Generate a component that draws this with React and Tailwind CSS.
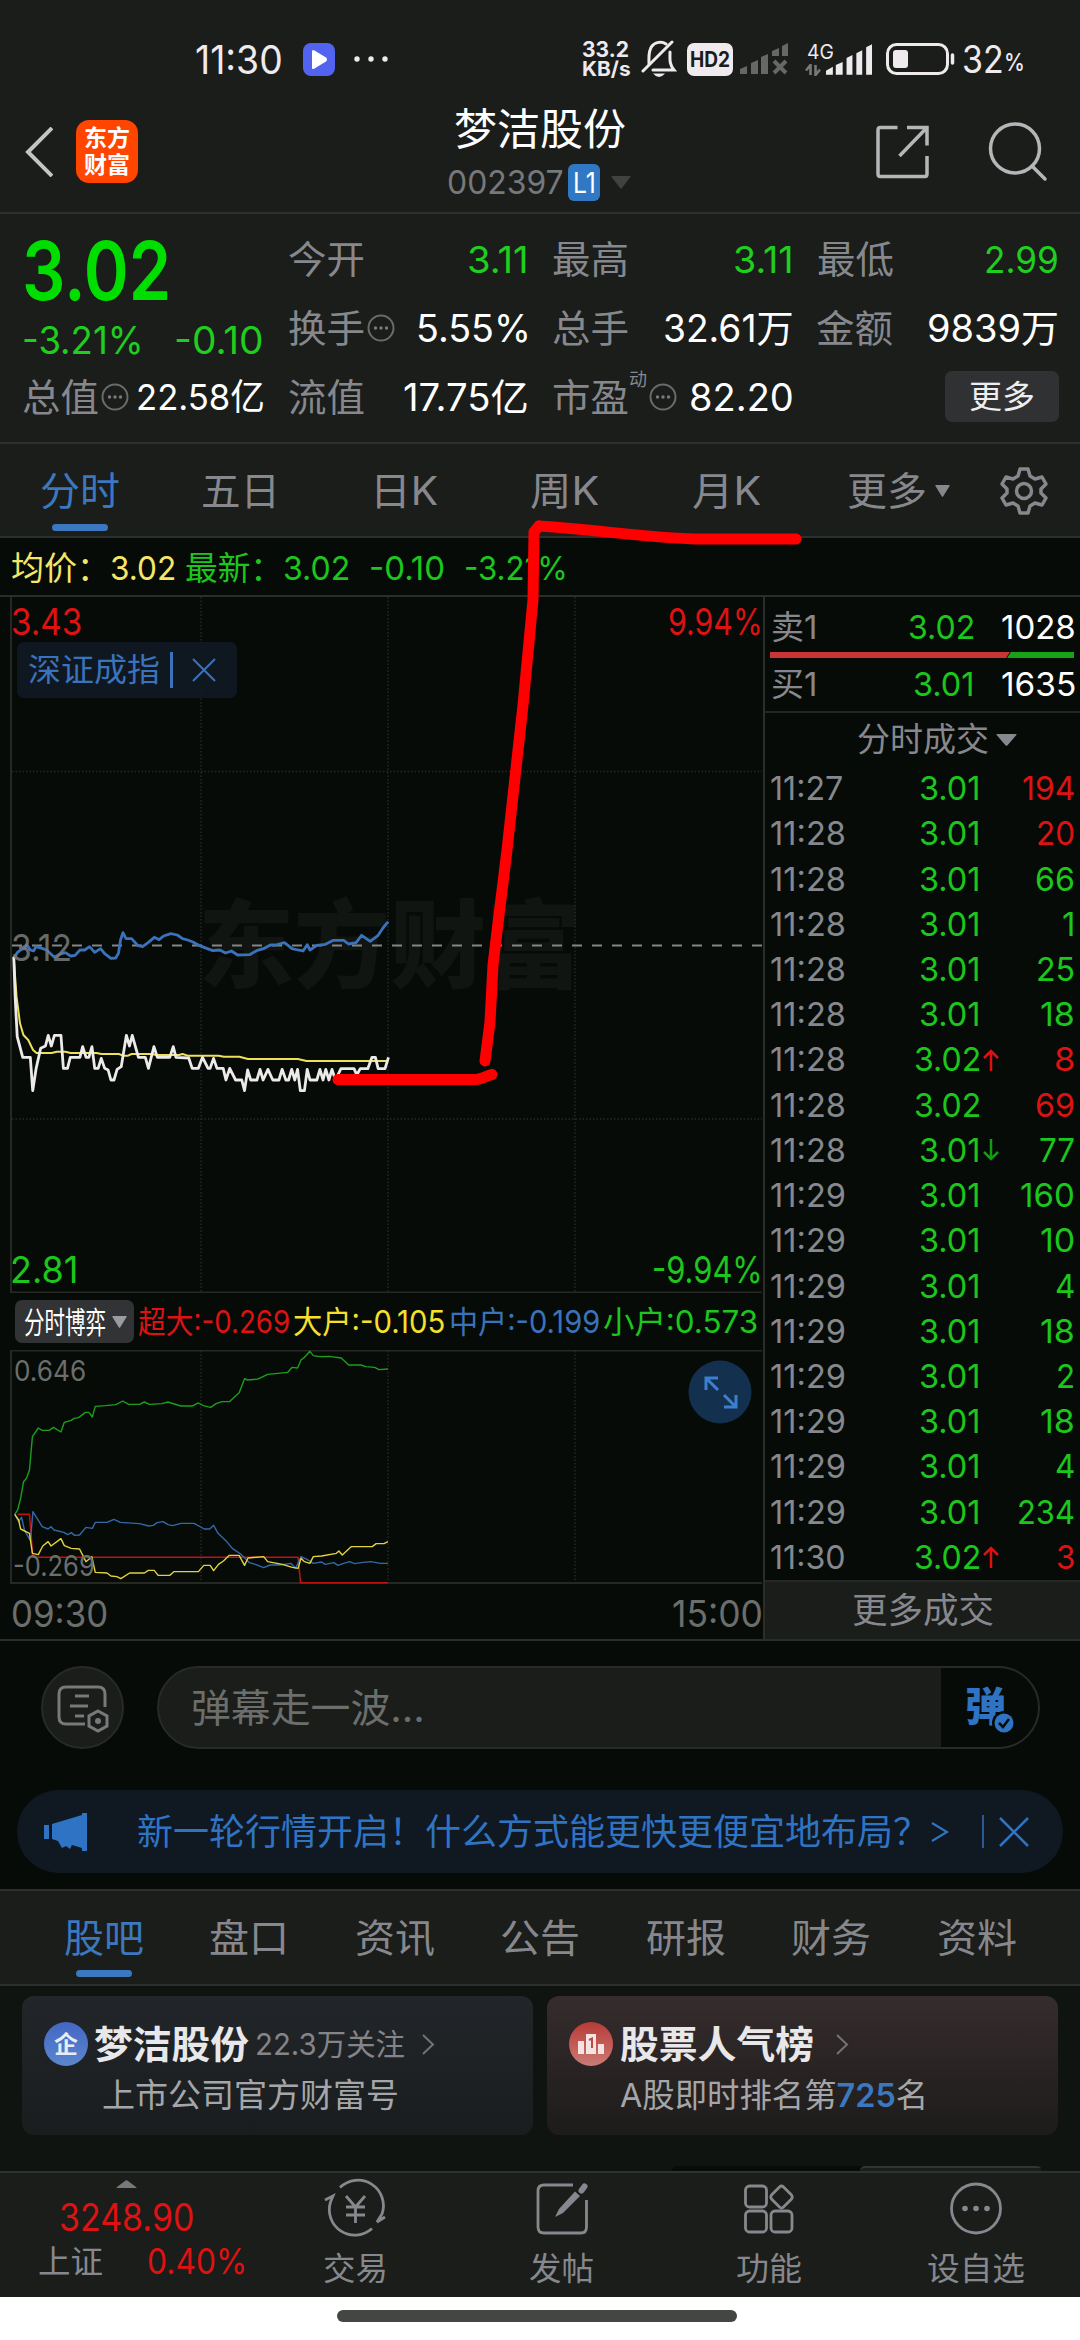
import React, { useLayoutEffect, useRef, useState } from "react";

/* Text squeezed or stretched horizontally to fill the width of its own box. */
function Fit({ className = "", children }) {
  const outer = useRef(null);
  const inner = useRef(null);
  const [scale, setScale] = useState(1);
  useLayoutEffect(() => {
    setScale(outer.current.clientWidth / inner.current.offsetWidth);
  }, []);
  return (
    <span ref={outer} className={"block shrink-0 whitespace-nowrap leading-none " + className}>
      <span ref={inner} className="inline-block origin-left leading-none align-top" style={{ transform: `scaleX(${scale})` }}>
        {children}
      </span>
    </span>
  );
}

const More = ({ className = "" }) => (
  <svg viewBox="0 0 28 28" className={"h-7 w-7 shrink-0 " + className} fill="none" stroke="#6a6b6d" strokeWidth="2">
    <circle cx="14" cy="14" r="12.5" />
    <g fill="#7a7b7e" stroke="none">
      <circle cx="8.5" cy="14" r="1.7" />
      <circle cx="14" cy="14" r="1.7" />
      <circle cx="19.5" cy="14" r="1.7" />
    </g>
  </svg>
);

const Triangle = ({ className = "" }) => (
  <svg viewBox="0 0 20 12" preserveAspectRatio="none" className={"shrink-0 " + className} fill="currentColor">
    <path d="M1 0H19Q20 0 19.4 1L10.8 11.4Q10 12 9.2 11.4L.6 1Q0 0 1 0Z" />
  </svg>
);

function StatusBar() {
  return (
    <div className="flex h-[105px] items-center pt-[13px] text-[#eeeaee]">
      <Fit className="ml-[195px] w-[88px] text-[39px]">11:30</Fit>
      <svg viewBox="0 0 32 33" className="ml-[20px] h-[33px] w-8">
        <rect width="32" height="33" rx="8" fill="#5263f0" />
        <path d="M9 8.500Q9 6 11.500 7.500L23 14.500Q25 16.500 23 18.500L11.500 25.500Q9 27 9 24.500Z" fill="#fff" />
      </svg>
      <svg viewBox="0 0 34 6" className="ml-[19px] h-1.5 w-[34px]" fill="currentColor">
        <circle cx="3" cy="3" r="2.700" />
        <circle cx="17" cy="3" r="2.700" />
        <circle cx="31" cy="3" r="2.700" />
      </svg>
      <div className="ml-[194px] flex flex-col font-bold">
        <Fit className="h-[20px] w-[47px] text-[21px]">33.2</Fit>
        <Fit className="h-[20px] w-[49px] text-[20px]">KB/s</Fit>
      </div>
      <svg viewBox="0 0 36 40" className="ml-[10px] h-10 w-9" fill="none" stroke="currentColor" strokeWidth="3">
        <path d="M8 25C8 19 7 12 11 7C14 3 21 2 25 5M29 13C29 20 28 25 33 31H12" strokeLinecap="round" />
        <path d="M2 32L31 3" strokeLinecap="round" />
        <path d="M12 34.500H24Q21 38 18 38Q15 38 12 34.500Z" fill="currentColor" stroke="none" />
      </svg>
      <div className="ml-[10px] flex h-[33px] w-[46px] items-center justify-center rounded-[7px] bg-[#eeeaee] text-[#1a1d1a]">
        <Fit className="w-[40px] text-[21px] font-bold">HD2</Fit>
      </div>
      <svg viewBox="0 0 48 32" className="ml-[7px] h-8 w-12" fill="#666866">
        <path d="M0 31V26L7 23V31ZM11 31V20L18 17V31ZM21 31V14L28 11V31ZM32 13V8L39 5V13ZM42 13V3L48 0V13Z" />
        <path d="M34 18L46 30M46 18L34 30" stroke="#666866" strokeWidth="4" />
      </svg>
      <div className="ml-[17px] flex h-[34px] w-[68px]">
        <div className="flex w-[28px] flex-col">
          <Fit className="ml-[2px] h-[20px] w-[27px] text-[20px]">4G</Fit>
          <svg viewBox="0 0 16 12" className="mt-[2px] h-3 w-4" stroke="#777977" strokeWidth="2.600" fill="none">
            <path d="M5.500 11V1L1 6.500M10.500 1V11L15 5.500" />
          </svg>
        </div>
        <svg viewBox="0 0 48 32" className="-ml-[7px] mt-[2px] h-8 w-12" fill="currentColor">
          <path d="M0 31V27L7 23V31ZM10 31V21L17 18V31ZM21 31V14L27 11V31ZM31 31V9L37 6V31ZM41 31V3L47 0V31Z" />
        </svg>
      </div>
      <svg viewBox="0 0 70 32" className="ml-[13px] h-8 w-[70px]" fill="none" stroke="currentColor" strokeWidth="3">
        <rect x="1.500" y="1.500" width="60" height="29" rx="9" />
        <path d="M66.500 12V20" strokeLinecap="round" strokeWidth="3.500" />
        <rect x="7" y="7" width="15" height="18" rx="3" fill="currentColor" stroke="none" />
      </svg>
      <Fit className="ml-[6px] w-[42px] text-[38px]">32</Fit>
      <Fit className="mt-2 w-[21px] text-[24px] font-medium">%</Fit>
    </div>
  );
}

function Header() {
  return (
    <div className="flex h-[109px] border-b-2 border-[#2c2f2c]">
      <div className="flex w-[447px]">
        <svg viewBox="0 0 28 50" className="ml-[25px] mt-[22px] h-[50px] w-7" fill="none" stroke="#c4c4c6" strokeWidth="4">
          <path d="M27 1L3 25L27 49" />
        </svg>
        <div className="ml-[23px] mt-[15px] flex h-[63px] w-[62px] flex-col items-center justify-center gap-[4px] rounded-[13px] bg-[#ff4500] text-[23px] font-bold text-white">
          <Fit className="w-[46px]">东方</Fit>
          <Fit className="w-[46px]">财富</Fit>
        </div>
      </div>
      <div className="flex w-[429px] flex-col">
        <Fit className="ml-[7px] mt-[3px] w-[172px] text-[43px] text-white">梦洁股份</Fit>
        <div className="mt-[13px] flex items-center">
          <Fit className="w-[117px] text-[33px] text-[#77787c]">002397</Fit>
          <span className="ml-[4px] flex h-[37px] w-[32px] items-center justify-center rounded-[6px] bg-[#3077c4] text-white">
            <Fit className="w-[23px] text-[29px]">L1</Fit>
          </span>
          <Triangle className="ml-[11px] h-[13px] w-[20px] text-[#3f4241]" />
        </div>
      </div>
      <div className="flex pt-[16px]">
        <svg viewBox="0 0 54 54" className="mt-[4px] h-[54px] w-[54px]" fill="none" stroke="#b6b6b9" strokeWidth="3.500">
          <path d="M21.500 2.500H4.500Q2 2.500 2 5V49Q2 51.500 4.500 51.500H49Q51 51.500 51 49V31M31 2.500H51V20.500M51 2.500L23.500 31" />
        </svg>
        <svg viewBox="0 0 60 62" className="ml-[58px] h-[62px] w-[60px]" fill="none" stroke="#b6b6b9" strokeWidth="3.500">
          <circle cx="27" cy="27.500" r="24.500" />
          <path d="M44 45L57 58" strokeLinecap="round" />
        </svg>
      </div>
    </div>
  );
}

const LABEL = "w-[77px] text-[38px] text-[#87888d]";

function Quote() {
  return (
    <div className="flex h-[230px] border-b-2 border-[#2c2f2c]">
      <div className="w-[265px] pl-[22px] pt-[17px] text-[#1fce1f]">
        <Fit className="w-[149px] text-[81px] font-semibold text-[#00de00]">3.02</Fit>
        <div className="mt-[9px] flex">
          <Fit className="w-[122px] text-[38px]">-3.21%</Fit>
          <Fit className="ml-[30px] w-[90px] text-[38px]">-0.10</Fit>
        </div>
        <div className="mt-[19px] flex items-center">
          <Fit className={LABEL}>总值</Fit>
          <More className="ml-[2px]" />
          <Fit className="ml-[7px] w-[129px] text-[36px] text-white">22.58亿</Fit>
        </div>
      </div>
      <div className="flex flex-col pl-[23px] pt-[11px]">
        <div className="flex h-[68px] items-center">
          <Fit className={LABEL}>今开</Fit>
          <Fit className="ml-[102px] w-[62px] text-[37px] text-[#1fce1f]">3.11</Fit>
          <Fit className={"ml-[23px] " + LABEL}>最高</Fit>
          <Fit className="ml-[104px] w-[61px] text-[37px] text-[#1fce1f]">3.11</Fit>
          <Fit className={"ml-[23px] " + LABEL}>最低</Fit>
          <Fit className="ml-[90px] w-[75px] text-[37px] text-[#1fce1f]">2.99</Fit>
        </div>
        <div className="flex h-[69px] items-center text-[38px] text-white">
          <Fit className={LABEL}>换手</Fit>
          <More className="ml-[2px]" />
          <Fit className="ml-[21px] w-[115px]">5.55%</Fit>
          <Fit className={"ml-[21px] " + LABEL}>总手</Fit>
          <Fit className="ml-[34px] w-[131px]">32.61万</Fit>
          <Fit className={"ml-[22px] " + LABEL}>金额</Fit>
          <Fit className="ml-[34px] w-[132px]">9839万</Fit>
        </div>
        <div className="flex h-[69px] items-center text-[38px] text-white">
          <Fit className={LABEL}>流值</Fit>
          <Fit className="ml-[38px] w-[126px]">17.75亿</Fit>
          <Fit className={"ml-[23px] " + LABEL}>市盈</Fit>
          <span className="mb-[34px] text-[18px] leading-none text-[#87888d]">动</span>
          <More className="ml-[2px]" />
          <Fit className="ml-[12px] w-[105px]">82.20</Fit>
          <div className="ml-[151px] flex h-[51px] w-[114px] items-center justify-center rounded-[7px] bg-[#303132]">
            <Fit className="w-[66px] text-[32px] text-[#eeeef0]">更多</Fit>
          </div>
        </div>
      </div>
    </div>
  );
}

function PeriodTabs() {
  return (
    <div className="flex h-[94px] border-b-2 border-[#2c2f2c] pt-[27px] text-[39px] text-[#87888d]">
      <div className="ml-[40px] flex w-[80px] flex-col items-center text-[#3b78bf]">
        <Fit className="w-[80px]">分时</Fit>
        <span className="mt-[14px] h-[7px] w-[56px] rounded-full bg-[#3b78bf]" />
      </div>
      <Fit className="ml-[81px] w-[79px]">五日</Fit>
      <Fit className="ml-[90px] w-[68px]">日K</Fit>
      <Fit className="ml-[92px] w-[69px]">周K</Fit>
      <Fit className="ml-[93px] w-[69px]">月K</Fit>
      <Fit className="ml-[86px] w-[80px]">更多</Fit>
      <Triangle className="ml-[8px] mt-[14px] h-[12px] w-[15px]" />
      <svg viewBox="0 0 48 48" className="-mt-[4px] ml-[50px] h-12 w-12" fill="none" stroke="#87888d" strokeWidth="3.500" strokeLinejoin="round">
        <path d="M20 2H28L30 9L35 12L42 10L46 17L41 22V26L46 31L42 38L35 36L30 39L28 46H20L18 39L13 36L6 38L2 31L7 26V22L2 17L6 10L13 12L18 9Z" />
        <circle cx="24" cy="24" r="7.500" />
      </svg>
    </div>
  );
}

const PRICE = "40,320 44,440 50,560 66,622 88,622 95,722 105,655 118,595 132,588 140,556 149,588 158,556 177,556 184,655 196,655 204,622 232,622 240,590 250,622 258,622 267,590 275,655 285,655 294,625 304,655 314,660 322,690 331,690 340,658 352,650 367,556 376,588 384,556 402,622 422,622 431,655 447,590 457,622 493,622 503,590 511,622 548,624 558,655 576,655 588,622 604,655 610,655 620,625 630,655 648,655 656,690 667,655 684,690 702,690 710,722 719,660 728,690 746,690 755,658 764,690 778,658 792,690 810,690 819,658 830,690 838,690 847,658 856,690 864,658 872,722 884,722 892,658 900,690 920,690 929,658 938,690 946,658 955,690 964,658 974,690 990,656 1028,656 1036,675 1046,656 1068,656 1080,622 1090,622 1098,656 1118,656 1128,622";
const AVERAGE = "40,325 48,440 58,520 68,555 82,570 96,600 106,609 150,609 165,605 190,605 205,609 280,609 295,612 345,612 358,617 372,617 382,612 440,612 455,615 520,615 530,612 545,617 635,617 650,620 695,620 720,627 865,627 890,633 1127,633";
const INDEX = "40,325 50,308 62,298 72,296 78,284 88,300 98,303 104,290 122,295 135,300 158,322 175,312 190,308 205,318 218,316 232,300 246,300 260,290 275,307 292,296 305,312 322,325 336,324 344,310 350,270 357,248 366,266 382,266 400,286 414,290 430,278 448,262 462,269 475,258 496,251 515,255 530,266 545,270 560,276 580,287 600,295 618,302 638,300 655,309 672,303 690,315 725,314 745,302 765,296 785,285 800,285 826,278 848,296 865,300 880,303 892,284 900,300 920,286 945,283 968,271 998,271 1012,282 1034,278 1050,256 1075,274 1098,256 1112,234 1127,215";

const SMALL = "30,853 36,840 42,805 48,755 54,745 60,720 66,620 78,594 86,601 100,601 109,592 124,606 131,577 145,571 151,565 160,563 174,547 181,547 188,561 194,529 215,527 236,524 250,513 262,523 284,523 294,516 304,523 330,521 342,516 368,528 392,528 404,519 414,527 429,532 440,521 452,515 467,515 487,488 498,446 504,450 526,447 545,433 586,427 595,412 606,414 613,390 620,382 631,364 638,377 650,380 670,379 695,384 710,405 735,405 745,410 763,412 772,419 790,417";
const HUGE = "36,853 60,853 67,982 607,982 612,1058 790,1058";
const MEDIUM = "30,853 38,875 44,862 50,902 62,932 67,845 86,890 98,897 104,890 110,900 130,907 138,914 145,908 152,916 162,915 175,892 188,895 194,877 218,877 232,868 245,877 284,881 303,888 312,886 320,878 332,875 342,884 352,887 368,880 395,880 416,897 427,897 435,886 444,910 460,932 473,955 490,972 508,998 520,1003 537,1013 550,1005 570,1005 592,1000 602,1015 613,980 625,988 638,1000 655,996 662,1003 680,998 688,1006 700,1000 712,995 722,1001 735,998 755,995 775,1000 790,1000";
const BIG = "30,853 38,870 42,897 60,910 66,970 78,974 87,948 98,935 104,948 124,926 131,947 145,955 162,957 175,995 187,980 194,1027 218,1029 226,1038 238,1040 246,1046 264,1029 294,1029 302,1021 314,1021 322,1036 346,1036 354,1025 404,1025 415,1006 428,1006 435,1022 445,1003 455,993 467,976 487,976 498,1006 505,984 537,980 545,995 575,1003 595,1012 607,1015 613,985 620,995 631,1000 638,980 655,978 685,970 690,963 697,975 715,950 758,950 766,941 782,941 790,935";

const Line = ({ points, color, width }) => (
  <polyline points={points} fill="none" stroke={color} strokeWidth={width} strokeLinejoin="round" vectorEffect="non-scaling-stroke" />
);

function MainChart() {
  return (
    <div className="relative h-[696px] w-[763px] text-[37px]">
      <div className="absolute left-[198px] top-[300px] text-[#111511]">
        <Fit className="w-[384px] text-[96px] font-black">东方财富</Fit>
      </div>
      <svg viewBox="0 597 763 696" className="absolute left-0 top-0 h-[696px] w-[763px]" fill="none">
        <path d="M11 597V1292.500H762" stroke="#262826" strokeWidth="2" />
        <path d="M201 597V1292M388 597V1292M575 597V1292M12 771.500H762M12 1119H762" stroke="#262926" strokeWidth="1.500" strokeDasharray="1.500 2" />
        <path d="M12 945.500H762" stroke="#858588" strokeWidth="2" strokeDasharray="10 10" />
        <g transform="translate(0 850) scale(0.3444 0.33333)">
          <Line points={AVERAGE} color="#eee05a" width="2" />
          <Line points={INDEX} color="#3a73bb" width="2.800" />
          <Line points={PRICE} color="#ecebea" width="2.800" />
        </g>
      </svg>
      <span className="absolute left-[11px] top-[332px] text-[#7a7c7a]/85"><Fit className="w-[61px]">3.12</Fit></span>
      <span className="absolute left-[11px] top-[6px] text-[#dd1212]"><Fit className="w-[71px]">3.43</Fit></span>
      <span className="absolute left-[668px] top-[6px] text-[#dd1212]"><Fit className="w-[95px]">9.94%</Fit></span>
      <div className="absolute left-[17px] top-[45px] flex h-[56px] w-[220px] items-center rounded-[7px] bg-[#111a24]/90 text-[#3a73bb]">
        <Fit className="ml-[11px] w-[132px] text-[32px]">深证成指</Fit>
        <span className="ml-[10px] h-[36px] w-[3px] bg-[#3a73bb]" />
        <svg viewBox="0 0 24 24" className="ml-[19px] h-6 w-6" stroke="currentColor" strokeWidth="2">
          <path d="M1 1L23 23M23 1L1 23" />
        </svg>
      </div>
      <span className="absolute left-[10px] top-[654px] text-[#1cc61c]"><Fit className="w-[68px]">2.81</Fit></span>
      <span className="absolute left-[652px] top-[654px] text-[#1cc61c]"><Fit className="w-[111px]">-9.94%</Fit></span>
    </div>
  );
}

function FlowChart() {
  return (
    <div className="relative h-[235px] w-[763px] text-[28px] text-[#6c6e6c]">
      <svg viewBox="0 1350 763 235" className="absolute left-0 top-0 h-[235px] w-[763px]" fill="none">
        <path d="M762 1350.500H11V1583H762" stroke="#262826" strokeWidth="2" />
        <path d="M201 1351V1583M388 1351V1583M575 1351V1583" stroke="#262926" strokeWidth="1.500" strokeDasharray="1.500 2" />
        <g transform="translate(0 1230) scale(0.49107 0.33333)">
          <Line points={SMALL} color="#1d9e1d" width="1.400" />
          <Line points={HUGE} color="#c01212" width="1.500" />
          <Line points={MEDIUM} color="#3468a8" width="1.400" />
          <Line points={BIG} color="#e2d23c" width="1.400" />
        </g>
      </svg>
      <span className="absolute left-[14px] top-[7px]"><Fit className="w-[72px]">0.646</Fit></span>
      <span className="absolute left-[13px] top-[202px]"><Fit className="w-[82px]">-0.269</Fit></span>
      <svg viewBox="0 0 64 64" className="absolute left-[688px] top-[10px] h-16 w-16" fill="none" stroke="#3b7fd0" strokeWidth="3">
        <circle cx="32" cy="32" r="31.500" fill="#14304f" stroke="none" />
        <path d="M18 30V18H30M18.500 18.500L30 30M48 35V47H36M47.500 46.500L36 35" />
      </svg>
    </div>
  );
}

const G = "text-[#1cc61c]";
const R = "text-[#dd1212]";
const TRADES = [
  ["11:27", "3.01", "", "194", R, "w-[53px]"],
  ["11:28", "3.01", "", "20", R, "w-[39px]"],
  ["11:28", "3.01", "", "66", G, "w-[40px]"],
  ["11:28", "3.01", "", "1", G, "w-[13px]"],
  ["11:28", "3.01", "", "25", G, "w-[39px]"],
  ["11:28", "3.01", "", "18", G, "w-[35px]"],
  ["11:28", "3.02", "up", "8", R, "w-[21px]"],
  ["11:28", "3.02", "", "69", R, "w-[40px]"],
  ["11:28", "3.01", "down", "77", G, "w-[36px]"],
  ["11:29", "3.01", "", "160", G, "w-[55px]"],
  ["11:29", "3.01", "", "10", G, "w-[35px]"],
  ["11:29", "3.01", "", "4", G, "w-[20px]"],
  ["11:29", "3.01", "", "18", G, "w-[35px]"],
  ["11:29", "3.01", "", "2", G, "w-[19px]"],
  ["11:29", "3.01", "", "18", G, "w-[35px]"],
  ["11:29", "3.01", "", "4", G, "w-[20px]"],
  ["11:29", "3.01", "", "234", G, "w-[58px]"],
  ["11:30", "3.02", "up", "3", R, "w-[19px]"],
];

const Arrow = ({ dir }) => (
  <svg viewBox="0 0 16 22" className="h-[22px] w-4" fill="none" stroke={dir === "up" ? "#e01010" : "#149a14"} strokeWidth="2.500">
    {dir === "up" && <path d="M8 22V2M1 9L8 2L15 9" />}
    {dir === "down" && <path d="M8 0V20M1 13L8 20L15 13" />}
  </svg>
);

function OrderPanel() {
  return (
    <div className="flex w-[317px] flex-col border-l-2 border-[#2b2d2b] text-[33px]">
      <div className="flex h-[55px] items-center pt-[5px]">
        <Fit className="ml-[6px] w-[46px] text-[#87888d]">卖1</Fit>
        <Fit className={"ml-[91px] w-[67px] " + G}>3.02</Fit>
        <Fit className="ml-[26px] w-[75px] text-white">1028</Fit>
      </div>
      <svg viewBox="0 0 304 6" className="ml-[5px] h-[6px] w-[304px]">
        <path d="M0 0H240L236 6H0Z" fill="#c93434" />
        <path d="M241 0H304V6H237Z" fill="#16a318" />
      </svg>
      <div className="flex h-[55px] items-center border-b-2 border-[#242624]">
        <Fit className="ml-[6px] w-[46px] text-[#87888d]">买1</Fit>
        <Fit className={"ml-[96px] w-[62px] " + G}>3.01</Fit>
        <Fit className="ml-[26px] w-[75px] text-white">1635</Fit>
      </div>
      <div className="flex h-[53px] items-center text-[#87888d]">
        <Fit className="ml-[92px] w-[132px]">分时成交</Fit>
        <Triangle className="ml-[7px] h-[12px] w-[21px]" />
      </div>
      <div className="flex h-[814px] flex-col">
        {TRADES.map(([time, price, dir, vol, color, w], i) => (
          <div key={i} className="flex flex-1 items-center">
            <Fit className={"ml-[5px] text-[#87888d] " + (i === 0 ? "w-[73px]" : "w-[76px]")}>{time}</Fit>
            <div className="ml-auto mr-[2px] flex">
              <Fit className={(price === "3.02" ? "w-[67px] " : "w-[62px] ") + G}>{price}</Fit>
            </div>
            <Arrow dir={dir} />
            <div className="mr-[5px] flex w-[76px] justify-end">
              <Fit className={w + " " + color}>{vol}</Fit>
            </div>
          </div>
        ))}
      </div>
      <div className="flex flex-1 items-center justify-center border-t-2 border-[#262826] bg-[#1a1d1a]">
        <Fit className="w-[142px] text-[35px] text-[#87888d]">更多成交</Fit>
      </div>
    </div>
  );
}

function ChartArea() {
  return (
    <div className="bg-[#060b08]">
      <div className="flex h-[59px] items-center border-b-2 border-[#2b2d2b] pt-[3px] text-[33px] text-[#1cc61c]">
        <Fit className="ml-[11px] w-[99px] text-[#f5e668]">均价：</Fit>
        <Fit className="w-[66px] text-[#f5e668]">3.02</Fit>
        <Fit className="ml-[9px] w-[98px]">最新：</Fit>
        <Fit className="w-[67px]">3.02</Fit>
        <Fit className="ml-[19px] w-[76px]">-0.10</Fit>
        <Fit className="ml-[19px] w-[104px]">-3.21%</Fit>
      </div>
      <div className="flex h-[1044px] border-b-2 border-[#2b2d2b]">
        <div className="w-[763px]">
          <MainChart />
          <div className="flex h-[57px] items-center text-[31px]">
            <div className="ml-[15px] flex h-[43px] w-[119px] items-center rounded-[7px] bg-[#323334]">
              <Fit className="ml-[9px] w-[82px] text-[30px] text-white">分时博弈</Fit>
              <Triangle className="ml-[6px] h-[12px] w-[15px] text-[#9a9ba0]" />
            </div>
            <Fit className="ml-[4px] w-[152px] text-[#dd1212]">超大:-0.269</Fit>
            <Fit className="ml-[3px] w-[152px] text-[#f5e02c]">大户:-0.105</Fit>
            <Fit className="ml-[4px] w-[151px] text-[#3a73bb]">中户:-0.199</Fit>
            <Fit className="ml-[3px] w-[155px] text-[#1cc61c]">小户:0.573</Fit>
          </div>
          <FlowChart />
          <div className="flex h-[54px] items-center justify-between pl-[11px] text-[37px] text-[#6c6e6c]">
            <Fit className="mt-[3px] w-[97px]">09:30</Fit>
            <Fit className="mt-[3px] w-[91px]">15:00</Fit>
          </div>
        </div>
        <OrderPanel />
      </div>
    </div>
  );
}

function Danmu() {
  return (
    <div className="flex h-[125px] items-start bg-[#060b08] pl-[41px] pt-[25px]">
      <div className="flex h-[83px] w-[83px] items-center justify-center rounded-full border-2 border-[#282a28] bg-[#1a1d1a]">
        <svg viewBox="0 0 52 48" className="mt-[3px] h-12 w-[52px]" fill="none" stroke="#77797b" strokeWidth="3">
          <path d="M28 39H9Q2 39 2 32V9Q2 2 9 2H41Q48 2 48 9V22" />
          <path d="M18 11H32M13 21H31M18 31H27" />
          <path d="M41 26L50 31V41L41 46L32 41V31Z" />
          <circle cx="41" cy="36" r="3" fill="#77797b" stroke="none" />
        </svg>
      </div>
      <div className="ml-[33px] flex h-[83px] w-[883px] items-center overflow-hidden rounded-full border-2 border-[#282a28] bg-[#1a1d1a]">
        <Fit className="ml-[32px] w-[234px] text-[39px] text-[#6c6e6c]">弹幕走一波...</Fit>
        <div className="relative ml-auto h-full w-[97px] bg-[#060b08] pl-[24px] pt-[19px]">
          <Fit className="w-[41px] text-[40px] font-black text-[#2f74c4]">弹</Fit>
          <svg viewBox="0 0 24 24" className="absolute left-[51px] top-[43px] h-6 w-6">
            <circle cx="12" cy="12" r="12" fill="#060b08" />
            <circle cx="12" cy="12" r="9.500" fill="#2f74c4" />
            <path d="M7 12L11 16L17 8" fill="none" stroke="#060b08" strokeWidth="2.500" />
          </svg>
        </div>
      </div>
    </div>
  );
}

function Banner() {
  return (
    <div className="bg-[#060b08] px-[17px] pb-[16px] pt-[24px]">
      <div className="flex h-[83px] items-center rounded-full bg-[#101821] text-[#2f74c4]">
        <svg viewBox="0 0 44 38" className="ml-[27px] h-[38px] w-11" fill="currentColor">
          <path d="M0 12H5V26H0ZM8 11L38 2V0H43V38H38V35L28 32L26 36L22 33L18 35L14 28L8 26Z" />
        </svg>
        <Fit className="ml-[49px] w-[792px] text-[36px]">新一轮行情开启！什么方式能更快更便宜地布局？</Fit>
        <svg viewBox="0 0 18 20" className="ml-[2px] h-5 w-[18px]" fill="none" stroke="currentColor" strokeWidth="2.200">
          <path d="M1 1L16 10L1 19" />
        </svg>
        <span className="ml-[33px] h-[33px] w-[2px] bg-[#275a94]" />
        <svg viewBox="0 0 30 30" className="ml-[15px] h-[30px] w-[30px]" stroke="currentColor" strokeWidth="2.500">
          <path d="M1 1L29 29M29 1L1 29" />
        </svg>
      </div>
    </div>
  );
}

function SectionTabs() {
  return (
    <div className="flex h-[97px] border-y-2 border-[#2c2f2c] bg-[#1a1d1a] pl-[31px] pt-[27px] text-[39px] text-[#87888d]">
      {["股吧", "盘口", "资讯", "公告", "研报", "财务", "资料"].map((name, i) => (
        <div key={name} className={"flex w-[145.500px] flex-col items-center " + (i === 0 ? "text-[#3b78bf]" : "")}>
          <Fit className="w-[80px]">{name}</Fit>
          {i === 0 && <span className="mt-[13px] h-[7px] w-[56px] rounded-full bg-[#3b78bf]" />}
        </div>
      ))}
    </div>
  );
}

const Chevron = ({ className }) => (
  <svg viewBox="0 0 13 21" className={"h-[21px] w-[13px] shrink-0 " + className} fill="none" stroke="#737376" strokeWidth="2">
    <path d="M1 1L11 10.500L1 20" />
  </svg>
);

function Cards() {
  return (
    <div className="flex h-[185px] flex-col bg-[#101411]">
      <div className="mt-[10px] flex gap-[14px] pl-[22px]">
        <div className="h-[139px] w-[511px] rounded-[12px] bg-gradient-to-b from-[#22262a] to-[#191d1e]">
          <div className="mt-[26px] flex h-[44px] items-center">
            <svg viewBox="0 0 44 44" className="ml-[22px] h-11 w-11 shrink-0">
              <defs>
                <linearGradient id="blueDisc" x2="0" y2="1"><stop stopColor="#4367c4" /><stop offset="1" stopColor="#5b86cc" /></linearGradient>
              </defs>
              <circle cx="22" cy="22" r="22" fill="url(#blueDisc)" />
              <text x="10" y="31" fontSize="24" fontWeight="700" fill="#e8ecf6">企</text>
            </svg>
            <Fit className="ml-[6px] w-[155px] text-[38px] font-bold text-[#e8e8ea]">梦洁股份</Fit>
            <Fit className="ml-[6px] w-[150px] text-[30px] text-[#858488]">22.3万关注</Fit>
            <Chevron className="ml-[17px]" />
          </div>
          <Fit className="ml-[80px] mt-[13px] w-[297px] text-[33px] text-[#a5a6a9]">上市公司官方财富号</Fit>
        </div>
        <div className="h-[139px] w-[511px] rounded-[12px] bg-gradient-to-b from-[#362c2d] to-[#1d1c1a]">
          <div className="mt-[26px] flex h-[44px] items-center">
            <svg viewBox="0 0 44 44" className="ml-[22px] h-11 w-11 shrink-0">
              <defs>
                <linearGradient id="redDisc" x2="0" y2="1"><stop stopColor="#b73b37" /><stop offset="1" stopColor="#cc7b76" /></linearGradient>
              </defs>
              <circle cx="22" cy="22" r="22" fill="url(#redDisc)" />
              <path d="M9 19H15V32H9ZM17 12H27V32H17ZM29 22H35V32H29Z" fill="#f3e4e2" />
              <path d="M20 18L23 16.500V26" fill="none" stroke="#bb4a46" strokeWidth="2" />
            </svg>
            <Fit className="ml-[7px] w-[194px] text-[38px] font-bold text-[#e8e8ea]">股票人气榜</Fit>
            <Chevron className="ml-[22px]" />
          </div>
          <Fit className="ml-[73px] mt-[13px] w-[308px] text-[33px] text-[#a5a6a9]">
            A股即时排名第<b className="font-semibold text-[#3b78bf]">725</b>名
          </Fit>
        </div>
      </div>
      <div className="ml-[672px] mt-auto flex h-[5px] w-[370px] overflow-hidden rounded-t-[6px] bg-[#080c09]">
        <span className="ml-auto w-[182px] rounded-tl-[10px] border-t-2 border-[#333533] bg-[#1a1d1a]" />
      </div>
    </div>
  );
}

const NavItem = ({ label, w, className, children }) => (
  <div className={"flex flex-col items-center pt-[8px] " + className}>
    <svg viewBox="0 0 62 56" className="h-14 w-[62px] overflow-visible" fill="none" stroke="#87888d" strokeWidth="2.800">
      {children}
    </svg>
    <Fit className={"mt-[16px] text-[32px] text-[#87888d] " + w}>{label}</Fit>
  </div>
);

function BottomNav() {
  return (
    <div className="flex h-[126px] border-t-2 border-[#2f322f] bg-[#1a1d1a]">
      <div className="flex w-[252px] flex-col">
        <Triangle className="ml-[116px] mt-[7px] h-[8px] w-[21px] rotate-180 text-[#77787b]" />
        <Fit className="ml-[59px] mt-[10px] w-[135px] text-[38px] text-[#dd1212]">3248.90</Fit>
        <div className="mt-[8px] flex items-center">
          <Fit className="ml-[38px] w-[65px] text-[32px] text-[#87888d]">上证</Fit>
          <Fit className="ml-[44px] w-[100px] text-[35px] text-[#dd1212]">0.40%</Fit>
        </div>
      </div>
      <NavItem label="交易" w="w-[65px]" className="w-[206px]">
        <path d="M16 6.500A25.500 25.500 0 0 1 58 33L53 41L61 36M48 47.500A25.500 25.500 0 0 1 6.500 21L9 15L1 19" />
        <path d="M22 15L31.500 26L41 15M31.500 25V42M22 26H41M22 34H41" />
      </NavItem>
      <NavItem label="发帖" w="w-[65px]" className="w-[207px]">
        <path d="M42 4H13Q7 4 7 10V46Q7 52 13 52H50Q55.500 52 55.500 46V19" />
        <path d="M24 36L28 28L44 10.500L49 15L32 32Z" fill="#87888d" stroke="none" />
        <path d="M50.500 9.500L53.500 5.500" strokeWidth="6" strokeLinecap="round" />
      </NavItem>
      <NavItem label="功能" w="w-[66px]" className="w-[207px]">
        <rect x="7.500" y="5" width="21" height="21" rx="4" />
        <rect x="7.500" y="30" width="21" height="21" rx="4" />
        <rect x="33" y="30" width="21" height="21" rx="4" />
        <path d="M41.500 6Q43.500 4 45.500 6L53.500 14Q55 16 53.500 18L45.500 26Q43.500 28 41.500 26L33.500 18Q32 16 33.500 14Z" />
      </NavItem>
      <NavItem label="设自选" w="w-[98px]" className="w-[208px]">
        <circle cx="31" cy="27.500" r="24.500" />
        <g fill="#87888d" stroke="none">
          <circle cx="20" cy="27.500" r="2.800" />
          <circle cx="31" cy="27.500" r="2.800" />
          <circle cx="42" cy="27.500" r="2.800" />
        </g>
      </NavItem>
    </div>
  );
}

export default function App() {
  return (
    <div className="relative flex h-[2340px] w-[1080px] flex-col overflow-hidden bg-white font-['Inter','Noto_Sans_CJK_SC',sans-serif]">
      <div className="bg-[#1a1d1a]">
        <StatusBar />
        <Header />
        <Quote />
        <PeriodTabs />
      </div>
      <ChartArea />
      <Danmu />
      <Banner />
      <SectionTabs />
      <Cards />
      <BottomNav />
      <div className="mx-auto mt-[13px] h-[12px] w-[400px] -translate-x-[3px] rounded-full bg-[#444643]" />
      <svg viewBox="0 0 1080 2340" className="pointer-events-none absolute left-0 top-0 h-[2340px] w-[1080px]" fill="none" stroke="#ff0000" strokeWidth="11" strokeLinecap="round" strokeLinejoin="round">
        <path d="M796 539H695C640 537 600 530 539 526" />
        <path d="M539 526L534 532L533 600L523 705L507 850L499 915L493 965L490 1022L485 1061" />
        <path d="M338 1079.500H475C482 1079.500 488 1075 492 1074.500" />
      </svg>
    </div>
  );
}
